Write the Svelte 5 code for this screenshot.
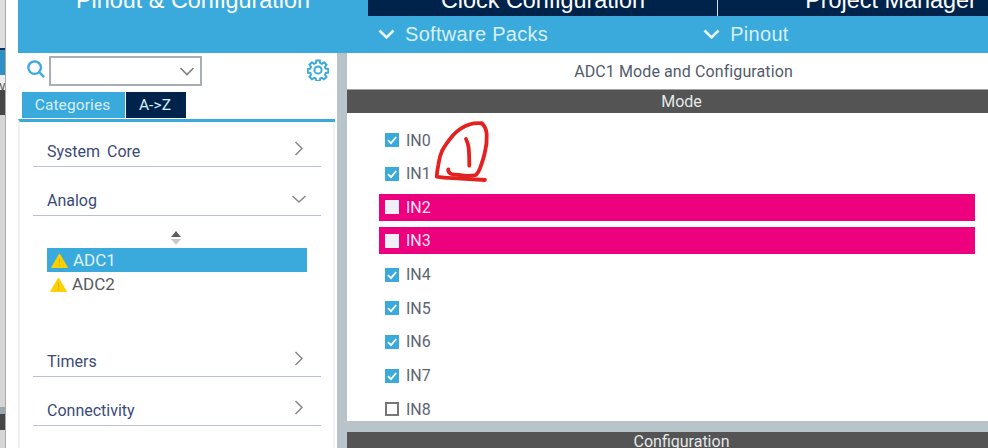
<script>
  const channels = [
    { name: "IN0", state: "on" },
    { name: "IN1", state: "on" },
    { name: "IN2", state: "blocked" },
    { name: "IN3", state: "blocked" },
    { name: "IN4", state: "on" },
    { name: "IN5", state: "on" },
    { name: "IN6", state: "on" },
    { name: "IN7", state: "on" },
    { name: "IN8", state: "off" },
  ];
</script>

{#snippet warn()}
  <svg class="warn" width="17" height="15" viewBox="0 0 18 16">
    <path d="M9 1 L17.5 15.5 L0.5 15.5 Z" fill="#fdd000" stroke="#fdd000" stroke-linejoin="round" />
    <path d="M9 6 V11 M9 12.5 V14" stroke="#d8b010" stroke-width="1.3" />
  </svg>
{/snippet}

{#snippet section(title, open)}
  <div class="section">
    <span>{title}</span>
    <svg class="chev" width="18" height="18" viewBox="0 0 18 18">
      {#if open}
        <path d="M2.500 8 L9 14 L15.500 8" />
      {:else}
        <path d="M5.500 3 L12 9.500 L5.500 16" />
      {/if}
    </svg>
  </div>
{/snippet}

<div class="page">
  <div class="strip">
    <div class="s-top"></div>
    <div class="s-navy"></div>
    <div class="s-blue"></div>
    <div class="s-text">w</div>
    <div class="s-dark"></div>
    <div class="s-mid"></div>
    <div class="s-grey"></div>
    <div class="s-dark2"></div>
  </div>

  <div class="window">
    <div class="tabs">
      <div class="tab active">Pinout &amp; Configuration</div>
      <div class="tab clock">Clock Configuration</div>
      <div class="tab project">Project Manager</div>
    </div>

    <div class="subbar">
      <div class="sub packs">
        <svg width="17" height="11" viewBox="0 0 17 11"><path d="M1.5 1.5 L8.5 8.5 L15.5 1.5" /></svg>
        Software Packs
      </div>
      <div class="sub pinout">
        <svg width="17" height="11" viewBox="0 0 17 11"><path d="M1.5 1.5 L8.5 8.5 L15.5 1.5" /></svg>
        Pinout
      </div>
    </div>

    <div class="body">
      <aside class="left">
        <div class="search">
          <svg class="lens" width="20" height="20" viewBox="0 0 21 21">
            <circle cx="8" cy="8" r="6.6" />
            <path d="M13 13 L18 18" />
          </svg>
          <div class="combo">
            <svg width="16" height="9" viewBox="0 0 16 9"><path d="M1.5 1 L8 7.5 L14.5 1" /></svg>
          </div>
          <svg class="gear" width="22" height="22" viewBox="0 0 22 22">
            <circle cx="11" cy="11" r="3.6" />
            <path d="M9.3 1.5 h3.4 l.5 2.6 l1.7 .7 l2.2 -1.5 l2.4 2.4 l-1.5 2.2 l.7 1.7 l2.6 .5 v3.4 l-2.6 .5 l-.7 1.7 l1.5 2.2 l-2.4 2.4 l-2.2 -1.5 l-1.7 .7 l-.5 2.6 h-3.4 l-.5 -2.6 l-1.7 -.7 l-2.2 1.5 l-2.4 -2.4 l1.5 -2.2 l-.7 -1.7 l-2.6 -.5 v-3.4 l2.6 -.5 l.7 -1.7 l-1.5 -2.2 l2.4 -2.4 l2.2 1.5 l1.7 -.7 Z" />
          </svg>
        </div>

        <div class="modes">
          <div class="mode cat">Categories</div>
          <div class="mode az">A-&gt;Z</div>
        </div>

        <div class="tree">
          {@render section("System Core", false)}
          {@render section("Analog", true)}
          <div class="periph">
            <svg class="sorter" width="12" height="14" viewBox="0 0 12 14">
              <path d="M6 0 L11 6 H1 Z" fill="#5b5f63" />
              <path d="M6 14 L11 8 H1 Z" fill="#c4c8cc" />
            </svg>
            <div class="item selected">{@render warn()}ADC1</div>
            <div class="item second">{@render warn()}ADC2</div>
          </div>
          {@render section("Timers", false)}
          {@render section("Connectivity", false)}
        </div>
      </aside>

      <main class="right">
        <div class="title">ADC1 Mode and Configuration</div>
        <div class="bar">Mode</div>
        <div class="list">
          {#each channels as ch}
            <div class="row {ch.state}">
              <span class="box">
                {#if ch.state === "on"}
                  <svg width="14" height="14" viewBox="0 0 14 14"><path d="M3 7.2 L6 10.2 L11.2 4" /></svg>
                {/if}
              </span>
              {ch.name}
            </div>
          {/each}
        </div>
        <div class="gap"></div>
        <div class="bar low">Configuration</div>

        <svg class="scribble" width="60" height="66" viewBox="0 0 60 66">
          <path d="M47.7 3.3 C43 3 40 3 36 4.3 C29 6.5 24 10 19.3 15 C14 21 10.5 26 7.7 31.7 C5.5 36.5 5 41 4.3 45 C3.5 49 3 53 2.7 56.7 C10 58 16 58 22.7 58.3 L51 60" />
          <path d="M47.7 3.3 C51 6 52.5 10 52.7 15 C53 21 52.5 26 51 31.7 C50 37 48 43 46 48.3 C45 51 44 53 42 55 C37 56 31 56 26 55 C22 55 19 55 16 53.3 C14.5 52 14 51 14.3 49.3" />
          <path d="M32 19 C33.500 22 34.500 25 34.700 28.300 C35.200 34 35.300 40 35.300 45.700" />
        </svg>
      </main>
    </div>
  </div>
</div>

<style>
  :global(body) {
    margin: 0;
    background: #fff;
  }
  .page {
    display: flex;
    width: 988px;
    height: 448px;
    overflow: hidden;
    font-family: Roboto, "Liberation Sans", sans-serif;
  }

  /* window behind */
  .strip {
    flex: none;
    width: 5px;
    height: 448px;
    margin-right: 12px;
    border-right: 1px solid #a9a9a9;
    background: #d6d6d6;
    display: flex;
    flex-direction: column;
    overflow: hidden;
  }
  .s-top { height: 48px; background: #dedede; }
  .s-navy { height: 2px; background: #0f2f57; }
  .s-blue { height: 25px; background: #2d8fc4; }
  .s-text { height: 15px; font-size: 14px; line-height: 22px; color: #666; background: #eee; text-indent: -5px; }
  .s-dark { height: 25px; background: #464646; }
  .s-mid { height: 292px; background: #d6d6d6; }
  .s-grey { height: 7px; background: #9ba6ad; }
  .s-dark2 { height: 16px; background: #464646; }

  .window {
    flex: none;
    width: 970px;
    display: flex;
    flex-direction: column;
  }

  .tabs {
    display: flex;
    height: 16px;
    align-items: flex-end;
    overflow: hidden;
    font-family: "Liberation Sans", Arial, sans-serif;
    font-size: 23.4px;
    color: #fff;
    background: #00234c;
  }
  .tab {
    flex: none;
    height: 16px;
    line-height: 0;
    text-align: center;
    white-space: nowrap;
  }
  .tab.active { width: 350px; background: #3aa9dc; }
  .tab.clock { width: 348px; margin-left: 1px; border-right: 1px solid #d9dee3; }
  .tab.project { width: 270px; padding-left: 76px; box-sizing: border-box; }

  .subbar {
    height: 37px;
    display: flex;
    align-items: center;
    background: #3aa9dc;
    font-family: "Liberation Sans", Arial, sans-serif;
    font-size: 20px;
    letter-spacing: 0.3px;
    color: #d8f0fb;
  }
  .sub {
    display: flex;
    align-items: center;
    gap: 10px;
  }
  .sub svg path {
    fill: none;
    stroke: #eaf7fd;
    stroke-width: 2.6;
  }
  .packs { margin-left: 360px; }
  .pinout { margin-left: 155px; }

  .body {
    flex: 1;
    display: flex;
    min-height: 0;
  }

  .left {
    flex: none;
    width: 319px;
    display: flex;
    flex-direction: column;
  }
  .search {
    display: flex;
    align-items: center;
    height: 36px;
    padding: 0 0 0 9px;
    box-sizing: border-box;
  }
  .lens {
    margin-bottom: 2px;
  }
  .lens circle,
  .lens path {
    fill: none;
    stroke: #3aa9dc;
    stroke-width: 2.4;
  }
  .combo {
    width: 153px;
    height: 30px;
    margin-left: 2px;
    box-sizing: border-box;
    border: 2px solid #a9adb5;
    display: flex;
    align-items: center;
    justify-content: flex-end;
    padding-right: 5px;
  }
  .combo path {
    fill: none;
    stroke: #7d7f82;
    stroke-width: 1.6;
  }
  .gear {
    margin-left: 105px;
    margin-bottom: 2px;
  }
  .gear circle,
  .gear path {
    fill: none;
    stroke: #3aa9dc;
    stroke-width: 2;
  }

  .modes {
    display: flex;
    gap: 1px;
    margin: 3px 0 0 4px;
    height: 26px;
    font-size: 15.5px;
    letter-spacing: 0.1px;
    color: #d8f0fb;
    line-height: 26px;
    text-align: center;
  }
  .mode { flex: none; }
  .cat { width: 103px; padding-right: 2px; box-sizing: border-box; background: #3aa9dc; }
  .az { width: 60px; padding-right: 2px; box-sizing: border-box; background: #00234c; }

  .tree {
    flex: 1;
    margin-top: 1px;
    margin-right: 2px;
    border-top: 3px solid #3aa9dc;
    border-left: 2px solid #eef0f5;
    box-shadow: inset -2px 0 0 #eef0f5;
    padding-left: 13px;
    padding-right: 14px;
  }
  .section {
    height: 45px;
    box-sizing: border-box;
    border-bottom: 1px solid #b9c2cd;
    display: flex;
    align-items: flex-end;
    justify-content: space-between;
    padding: 0 13px 4px 14px;
    font-size: 16px;
    word-spacing: 3px;
    color: #3b4a78;
  }
  .section + .section {
    height: 49px;
  }
  .section span {
    line-height: 20px;
  }
  .chev {
    margin-bottom: 5px;
  }
  .chev path {
    fill: none;
    stroke: #85888c;
    stroke-width: 1.5;
  }

  .periph {
    height: 116px;
    box-sizing: border-box;
    padding: 15px 14px 0;
    font-size: 17px;
    color: #565a60;
  }
  .sorter {
    display: block;
    margin: 0 auto 3px 123px;
  }
  .item {
    width: 260px;
    height: 24px;
    display: flex;
    align-items: center;
    gap: 5px;
    padding-left: 4px;
    box-sizing: border-box;
  }
  .selected {
    background: #3aa9dc;
    color: #dff3fc;
  }
  .second {
    padding-left: 3px;
  }

  .right {
    position: relative;
    flex: none;
    width: 641px;
    margin-left: 10px;
    display: flex;
    flex-direction: column;
    background: #fff;
    box-shadow: -10px 0 0 #b8c4ca;
  }
  .title {
    height: 36px;
    line-height: 37px;
    padding-left: 32px;
    text-align: center;
    font-size: 16px;
    letter-spacing: 0.1px;
    color: #525c6b;
  }
  .bar {
    height: 24px;
    line-height: 24px;
    padding-left: 28px;
    text-align: center;
    font-size: 16px;
    color: #e4e8ea;
    background: #535453;
    border-top: 1px solid #9ea3a6;
    box-sizing: border-box;
  }
  .bar.low {
    height: 16px;
    line-height: 20px;
    flex: none;
    border-top: 0;
    overflow: hidden;
  }
  .gap {
    height: 11px;
    flex: none;
    background: #b8c4ca;
  }
  .list {
    height: 308px;
    flex: none;
    padding-top: 13.5px;
    box-sizing: border-box;
    overflow: hidden;
  }
  .row {
    height: 27px;
    margin: 0 13px 6.67px 32px;
    display: flex;
    align-items: center;
    gap: 7px;
    padding-left: 6px;
    font-size: 16px;
    color: #5e6570;
  }
  .blocked {
    background: #ec007d;
    color: #fbe1ef;
  }
  .box {
    flex: none;
    width: 14px;
    height: 14px;
    box-sizing: border-box;
    display: block;
  }
  .on .box {
    background: #3aa9dc;
  }
  .on .box svg {
    display: block;
  }
  .on .box path {
    fill: none;
    stroke: #fff;
    stroke-width: 1.8;
  }
  .blocked .box {
    background: #eef0f5;
  }
  .off .box {
    border: 2px solid #777;
    background: #fff;
  }

  .scribble {
    position: absolute;
    left: 87px;
    top: 67px;
  }
  .scribble path {
    fill: none;
    stroke: #e3211f;
    stroke-width: 3.8;
    stroke-linecap: round;
    stroke-linejoin: round;
  }
</style>
